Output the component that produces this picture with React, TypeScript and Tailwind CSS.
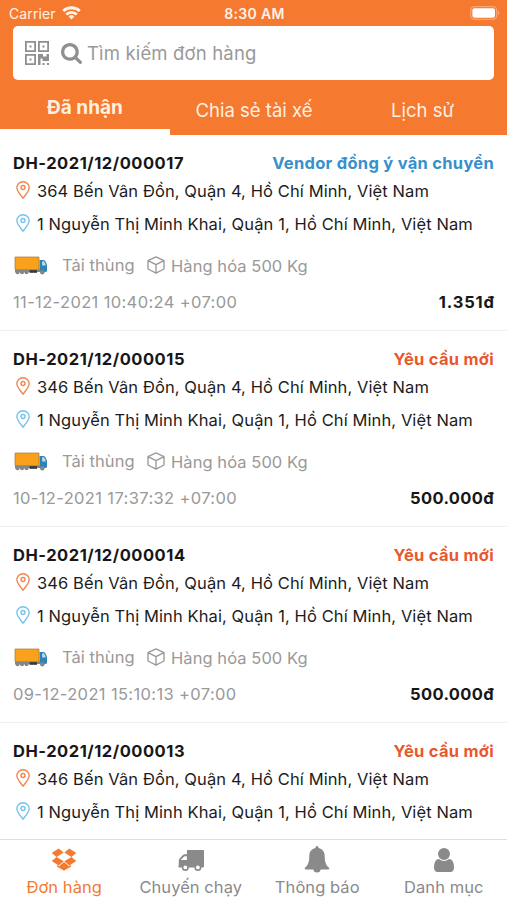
import type { ReactNode } from "react";

type Order = {
  code: string;
  status: string;
  statusClass: string;
  from: string;
  time?: string;
  price?: string;
  priceClass?: string;
};

const orders: Order[] = [
  {
    code: "DH-2021/12/000017",
    status: "Vendor đồng ý vận chuyển",
    statusClass: "text-[#3690cb] tracking-[0.28px]",
    from: "364 Bến Vân Đồn, Quận 4, Hồ Chí Minh, Việt Nam",
    time: "11-12-2021 10:40:24 +07:00",
    price: "1.351đ",
    priceClass: "tracking-[0.8px] -mr-[0.6px]",
  },
  {
    code: "DH-2021/12/000015",
    status: "Yêu cầu mới",
    statusClass: "text-[#e9582c] tracking-[0.28px]",
    from: "346 Bến Vân Đồn, Quận 4, Hồ Chí Minh, Việt Nam",
    time: "10-12-2021 17:37:32 +07:00",
    price: "500.000đ",
    priceClass: "tracking-[0.35px]",
  },
  {
    code: "DH-2021/12/000014",
    status: "Yêu cầu mới",
    statusClass: "text-[#e9582c] tracking-[0.28px]",
    from: "346 Bến Vân Đồn, Quận 4, Hồ Chí Minh, Việt Nam",
    time: "09-12-2021 15:10:13 +07:00",
    price: "500.000đ",
    priceClass: "tracking-[0.35px]",
  },
  {
    code: "DH-2021/12/000013",
    status: "Yêu cầu mới",
    statusClass: "text-[#e9582c] tracking-[0.28px]",
    from: "346 Bến Vân Đồn, Quận 4, Hồ Chí Minh, Việt Nam",
  },
];

function WifiIcon() {
  return (
    <svg className="h-[14px] w-[19px]" viewBox="0 0 19 14" fill="none" stroke="#fff2e6" strokeWidth="2.8">
      <path d="M1.2 5.1a12 12 0 0 1 16.6 0" />
      <path d="M4.2 8.4a7.7 7.7 0 0 1 10.6 0" />
      <path d="M9.5 13.5 6.6 10.5a4.2 4.2 0 0 1 5.8 0z" fill="#fff2e6" stroke="none" />
    </svg>
  );
}

function BatteryIcon() {
  return (
    <svg className="h-[14px] w-[30px]" viewBox="0 0 30 14">
      <rect x=".7" y=".7" width="26" height="12.6" rx="3.6" fill="none" stroke="#fba473" strokeWidth="1.2" />
      <rect x="2.4" y="2.3" width="22.6" height="9.4" rx="2" fill="#fff" />
      <path d="M28 4.8c1.6.6 1.6 3.8 0 4.4z" fill="#fba473" />
    </svg>
  );
}

function QrIcon() {
  return (
    <svg className="h-6 w-6" viewBox="0 0 24 24" fill="#8f8f8f">
      <path fillRule="evenodd" d="M0 0h11v11H0zM1.8 1.8v7.4h7.4V1.8zM13 0h11v11H13zM14.8 1.8v7.4h7.4V1.8zM0 13h11v11H0zM1.8 14.8v7.4h7.4v-7.4z" />
      <path d="M4.5 4.5h2v2h-2zM17.5 4.5h2v2h-2zM4.5 17.5h2v2h-2zM13 13h5v2.5h3.5V13H24v7h-6.5v-2.5h-2V24H13zM17.5 22h2v2h-2zM22 22h2v2h-2z" />
    </svg>
  );
}

function SearchIcon() {
  return (
    <svg className="h-[21px] w-[21px]" viewBox="64 128 1664 1664" fill="#8f8f8f">
      <path d="M1216 832q0-185-131.500-316.500t-316.500-131.500-316.500 131.500-131.500 316.500 131.500 316.500 316.500 131.500 316.500-131.500 131.500-316.500zm512 832q0 52-38 90t-90 38q-54 0-90-38l-343-342q-179 124-399 124-143 0-273.500-55.500t-225-150-150-225-55.500-273.500 55.500-273.500 150-225 225-150 273.500-55.500 273.500 55.500 225 150 150 225 55.500 273.500q0 220-124 399l343 343q37 37 37 90z" />
    </svg>
  );
}

function PinIcon({ className }: { className: string }) {
  return (
    <svg className={`h-[18px] w-[14px] ${className}`} viewBox="0 0 14 18" fill="none" stroke="currentColor" strokeWidth="1.35">
      <path d="M7 17.2C5.5 15 .8 10.5.8 6.6a6.200 5.900 0 0 1 12.400 0C13.200 10.500 8.500 15 7 17.200z" />
      <circle cx="7" cy="6.5" r="2" />
    </svg>
  );
}

function LorryIcon() {
  return (
    <svg className="-ml-px -mt-px h-[19px] w-[34px]" viewBox="0 0 34 19">
      <path d="M1 13.500h31.500v2.500H1z" fill="#85898d" />
      <path d="M15.500 14.200h7.500v2.600h-7.500z" fill="#33383d" />
      <path d="M25.500 4h4c1.500 0 3 3 3.500 5.500v5.800h-7.500z" fill="#2c83b5" />
      <path d="M28.200 5.200h1.500c1 .6 1.800 2.500 2 4.300h-3.500z" fill="#c9dce6" />
      <path d="M1 1h24v12.500H1z" fill="#f9a11b" stroke="#a97834" strokeWidth=".7" />
      <g fill="#858585">
        <circle cx="3.500" cy="16.200" r="2" />
        <circle cx="8" cy="16.200" r="2" />
        <circle cx="12.500" cy="16.200" r="2" />
        <circle cx="28.300" cy="16.200" r="2.200" />
      </g>
    </svg>
  );
}

function BoxIcon() {
  return (
    <svg className="h-[18px] w-[18px]" viewBox="0 0 18 18" fill="none" stroke="#999" strokeWidth="1.35" strokeLinejoin="round">
      <path d="M9 .9 17 4.700v8.300L9 17.100 1 13V4.700zM1 4.700 9 8.700l8-4M9 8.700v8.400" />
    </svg>
  );
}

function DropboxIcon() {
  return (
    <svg className="h-6 w-[26px]" viewBox="0 0 26 24" fill="currentColor">
      <path d="M7.700.5 12.700 4.500 5.600 8.900.7 5.100zM18.300.5 13.300 4.500l7.100 4.400 4.900-3.800zM5.600 8.900l7.100 4.400-5 4.100-7-4.500zM20.400 8.900l-7.100 4.400 5 4.100 7-4.500zM13 14.100l5 4.200 2.100-1.400v1.600L13 22.700l-7.100-4.200v-1.600L8 18.300z" />
    </svg>
  );
}

function TruckIcon() {
  return (
    <svg className="h-6 w-[26px]" viewBox="0 0 26 24" fill="currentColor">
      <path fillRule="evenodd" d="M9.700 2h15.500q.8 0 .8.900v15.600q0 1-1.500 1h-1.100a3.500 3.500 0 0 1-7 0h-5.600a3.500 3.500 0 0 1-7 0H1.500Q0 19.500.3 18c.7 0 .5-3.500.5-5.500q0-1.300.8-2.100L4.900 7q.8-.8 2-.8h2V2.900q0-.9.8-.9zM2.500 12h6.400V8.200h-2q-.4 0-.7.3l-3.400 3.200zM7.300 17.500a1.900 1.900 0 1 0 0 3.800 1.900 1.900 0 0 0 0-3.800zm12.600 0a1.900 1.900 0 1 0 0 3.800 1.900 1.900 0 0 0 0-3.800z" />
    </svg>
  );
}

function BellIcon() {
  return (
    <svg className="h-[27px] w-[26px]" viewBox="0 0 26 27" fill="currentColor">
      <path d="M13 0c1 0 1.700.9 1.500 2 3.900.8 6.200 3.800 6.200 7.800 0 6.500 1.400 9.700 4.600 12.200 0 1-.8 1.500-1.700 1.500H2.400c-.9 0-1.700-.5-1.700-1.500 3.200-2.500 4.600-5.700 4.600-12.200 0-4 2.300-7 6.200-7.800C11.300.9 12 0 13 0z" />
      <path d="M9.400 23h7.200a3.600 3.600 0 0 1-7.200 0z" />
    </svg>
  );
}

function UserIcon() {
  return (
    <svg className="h-6 w-5" viewBox="256 128 1280 1536" fill="currentColor">
      <path d="M1536 1399q0 109-62.500 187t-150.500 78h-854q-88 0-150.500-78t-62.500-187q0-85 8.500-160.500t31.500-152 58.500-131 94-89 134.500-34.500q131 128 313 128t313-128q76 0 134.500 34.500t94 89 58.500 131 31.500 152 8.500 160.500zm-256-887q0 159-112.500 271.500t-271.500 112.500-271.500-112.500-112.500-271.500 112.500-271.500 271.500-112.500 271.500 112.500 112.500 271.500z" />
    </svg>
  );
}

function OrderRow({ order }: { order: Order }) {
  return (
    <article className="h-[196px] shrink-0 border-b border-[#f0f0f0] px-[13px] pt-[17px] whitespace-nowrap">
      <div className="flex h-[22px] items-center justify-between text-[16.5px] font-bold">
        <span className="tracking-[0.52px] text-[#171717]">{order.code}</span>
        <span className={order.statusClass}>{order.status}</span>
      </div>
      <div className="mt-[3px] flex h-7 items-center gap-[7px] pl-[3px] text-[16.5px] tracking-[0.1px] text-[#1c1c1c]">
        <PinIcon className="-mt-0.5 text-[#f2844e]" />
        <span>{order.from}</span>
      </div>
      <div className="mt-[5px] flex h-7 items-center gap-[7px] pl-[3px] text-[16.5px] tracking-[0.1px] text-[#1c1c1c]">
        <PinIcon className="-mt-0.5 text-[#74c2ee]" />
        <span>1 Nguyễn Thị Minh Khai, Quận 1, Hồ Chí Minh, Việt Nam</span>
      </div>
      {order.time && (
        <>
          <div className="mt-[14px] flex h-7 items-center pl-[2px] text-[16.5px] tracking-[0.06px] text-[#999]">
            <LorryIcon />
            <span className="-mt-px ml-[14px] w-[72px]">Tải thùng</span>
            <span className="-mt-0.5 ml-[13px] mr-[6px]"><BoxIcon /></span>
            <span className="pt-px">Hàng hóa 500 Kg</span>
          </div>
          <div className="mt-2 flex h-7 items-center justify-between text-[16.5px]">
            <span className="tracking-[0.36px] text-[#999]">{order.time}</span>
            <span className={`font-bold text-[#171717] ${order.priceClass}`}>{order.price}</span>
          </div>
        </>
      )}
    </article>
  );
}

function NavItem({ label, active, children }: { label: string; active?: boolean; children: ReactNode }) {
  return (
    <button className={`flex flex-col items-center whitespace-nowrap text-[16.5px] tracking-[0.06px] ${active ? "text-[#f37b31]" : "text-[#8a8a8a]"}`}>
      <span className="flex h-[34px] items-center justify-center pt-[5px]">{children}</span>
      <span className="pt-px leading-6">{label}</span>
    </button>
  );
}

export default function App() {
  return (
    <div className="flex h-[900px] w-[507px] flex-col overflow-hidden bg-white font-['Inter','Noto_Sans',sans-serif]">
      <header className="h-[135px] shrink-0 bg-[#f5792f]">
        <div className="grid h-[26px] grid-cols-3 items-center pl-[9px] pr-[7px] text-[14px] text-[#fff2e6]">
          <div className="flex items-center gap-[6px] tracking-[0.1px]">
            <span>Carrier</span>
            <WifiIcon />
          </div>
          <span className="text-center font-semibold tracking-[0.3px]">8:30 AM</span>
          <div className="flex justify-end"><BatteryIcon /></div>
        </div>
        <div className="mx-[13px] flex h-[54px] items-center rounded-[5px] bg-white pl-3 text-[18.5px] tracking-[0.16px] text-[#999]">
          <QrIcon />
          <span className="ml-3"><SearchIcon /></span>
          <span className="ml-[5px] pt-0.5">Tìm kiếm đơn hàng</span>
        </div>
        <nav className="grid h-[55px] grid-cols-[170px_168px_169px] text-[18.5px] text-[#fff0e0]">
          <button className="flex items-center justify-center border-b-6 border-white pt-2 text-[19px] font-bold">Đã nhận</button>
          <button className="flex items-center justify-center pt-[7px]">Chia sẻ tài xế</button>
          <button className="flex items-center justify-center pt-[7px]">Lịch sử</button>
        </nav>
      </header>
      <main className="flex min-h-0 flex-1 flex-col overflow-hidden">
        {orders.map((order) => <OrderRow key={order.code} order={order} />)}
      </main>
      <footer className="grid h-[61px] shrink-0 grid-cols-4 border-t border-[#dedede] bg-white pl-px">
        <NavItem label="Đơn hàng" active><DropboxIcon /></NavItem>
        <NavItem label="Chuyến chạy"><TruckIcon /></NavItem>
        <NavItem label="Thông báo"><BellIcon /></NavItem>
        <NavItem label="Danh mục"><UserIcon /></NavItem>
      </footer>
    </div>
  );
}
